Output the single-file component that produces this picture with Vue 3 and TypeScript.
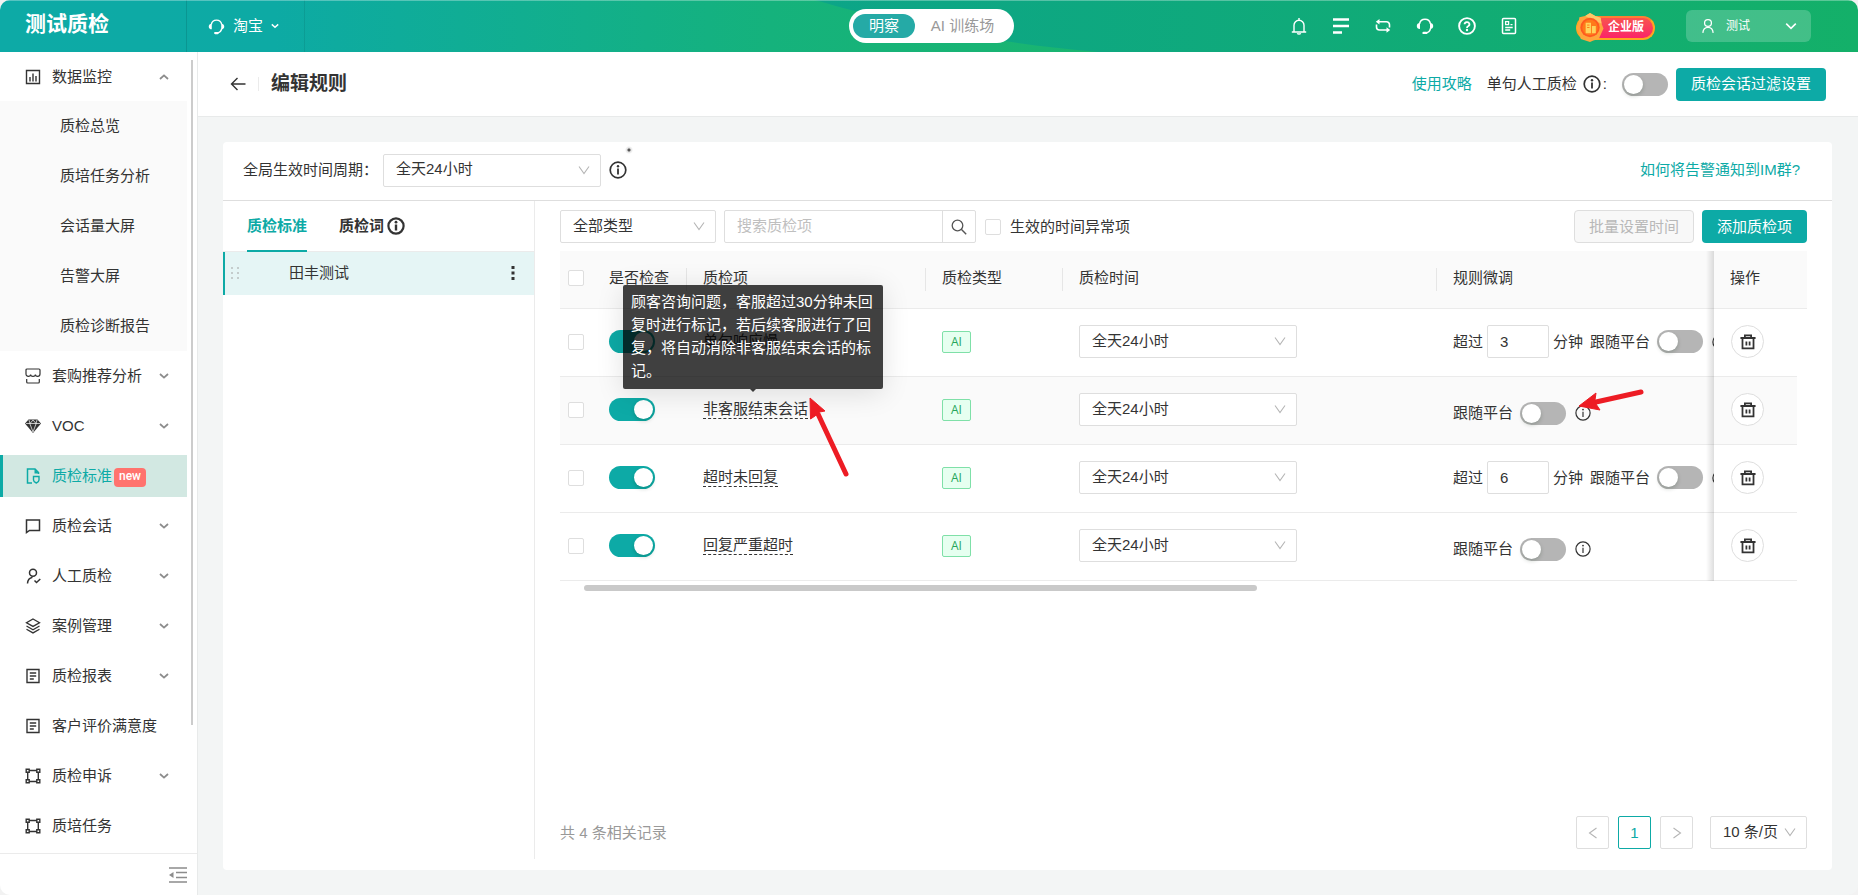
<script setup lang="ts">
import { ref } from 'vue'

interface MenuItem {
  label: string
  icon: string
  chevron?: boolean
  active?: boolean
  badge?: string
}

interface RuleRow {
  name: string
  enabled: boolean
  minutes?: number
  hovered?: boolean
  tip?: string
}

const subMenu: string[] = ['质检总览', '质培任务分析', '会话量大屏', '告警大屏', '质检诊断报告']

const menu: MenuItem[] = [
  { label: '套购推荐分析', icon: 'shop', chevron: true },
  { label: 'VOC', icon: 'diamond', chevron: true },
  { label: '质检标准', icon: 'standard', active: true, badge: 'new' },
  { label: '质检会话', icon: 'chat', chevron: true },
  { label: '人工质检', icon: 'person-check', chevron: true },
  { label: '案例管理', icon: 'layers', chevron: true },
  { label: '质检报表', icon: 'report', chevron: true },
  { label: '客户评价满意度', icon: 'report' },
  { label: '质检申诉', icon: 'frame', chevron: true },
  { label: '质培任务', icon: 'frame' },
]

const tools = [
  { icon: 'bell', label: '通知' },
  { icon: 'lines', label: '列表' },
  { icon: 'swap', label: '切换' },
  { icon: 'headset', label: '客服' },
  { icon: 'help', label: '帮助' },
  { icon: 'doc', label: '文档' },
]

const rows = ref<RuleRow[]>([
  { name: '单句响应慢', enabled: true, minutes: 3 },
  {
    name: '非客服结束会话',
    enabled: true,
    hovered: true,
    tip: '顾客咨询问题，客服超过30分钟未回复时进行标记，若后续客服进行了回复，将自动消除非客服结束会话的标记。',
  },
  { name: '超时未回复', enabled: true, minutes: 6 },
  { name: '回复严重超时', enabled: true },
])
</script>

<template>
  <svg class="sprite" aria-hidden="true">
    <symbol id="i-headset" viewBox="0 0 18 18">
      <path d="M3.500 6.800A5.600 5.600 0 0 1 14.500 6.800M14.500 11.300C14 14 12 15.800 9.200 15.900" fill="none" stroke="currentColor" stroke-width="1.500" />
      <path d="M4 6v6C1.900 12 .8 10.800 .8 9S1.900 6 4 6zM14 6v6c2.100 0 3.200-1.200 3.200-3S16.100 6 14 6z" fill="currentColor" />
      <path d="M7.600 15.900h2.600" stroke="currentColor" stroke-width="2.400" stroke-linecap="round" />
    </symbol>
    <symbol id="i-bell" viewBox="0 0 18 18">
      <path d="M4 15V8.200a5 5 0 0 1 10 0V15M1.800 15h14.400M9 3V1M7.300 16.200a1.800 1.300 0 0 0 3.400 0" fill="none" stroke="currentColor" stroke-width="1.400" />
    </symbol>
    <symbol id="i-lines" viewBox="0 0 18 18">
      <path d="M1 2.500h16M1 9h16M1 15.500h9" stroke="currentColor" stroke-width="2.400" />
    </symbol>
    <symbol id="i-swap" viewBox="0 0 18 18">
      <path d="M4 4.800h8.500a3 3 0 0 1 3 3v2.700M14 13H5.500a3 3 0 0 1-3-3V7.500" fill="none" stroke="currentColor" stroke-width="1.600" />
      <path d="M5.500 2v5.600L1.800 4.800zM12.500 10.200v5.600l3.700-2.800z" fill="currentColor" />
    </symbol>
    <symbol id="i-help" viewBox="0 0 18 18">
      <circle cx="9" cy="9" r="7.900" fill="none" stroke="currentColor" stroke-width="1.900" />
      <path d="M6.600 7.200a2.400 2.200 0 1 1 3.500 2c-.8.400-1.100.8-1.100 1.700" fill="none" stroke="currentColor" stroke-width="1.800" />
      <circle cx="9" cy="13" r="1.200" fill="currentColor" />
    </symbol>
    <symbol id="i-doc" viewBox="0 0 18 18">
      <rect x="2.500" y="1.500" width="13" height="15" rx="1" fill="none" stroke="currentColor" stroke-width="1.500" />
      <path d="M5.600 4.700h3v3h-3zM10.500 7.700h2M5.200 10.500h7.500M5.200 13h5" fill="none" stroke="currentColor" stroke-width="1.300" />
    </symbol>
    <symbol id="i-user" viewBox="0 0 14 18">
      <circle cx="7" cy="5.500" r="4" fill="none" stroke="currentColor" stroke-width="1.500" />
      <path d="M1 17c.3-4 2.500-6.500 6-6.500s5.700 2.500 6 6.500" fill="none" stroke="currentColor" stroke-width="1.500" />
    </symbol>
    <symbol id="i-chart" viewBox="0 0 16 16">
      <path d="M1.500 1.500h13v13h-13zM5 8v4.500M8 4.500v8M11 7v5.500" fill="none" stroke="currentColor" stroke-width="1.400" />
    </symbol>
    <symbol id="i-shop" viewBox="0 0 16 16">
      <path d="M1 6V2a1 1 0 0 1 1-1h12a1 1 0 0 1 1 1v4c0 1.500-1.200 2.300-2.300 2.300S10.400 7.500 10.400 6.500C10.400 7.500 9.300 8.300 8 8.300S5.600 7.500 5.600 6.500C5.600 7.500 4.400 8.300 3.300 8.300S1 7.500 1 6zM1.700 11v3a1 1 0 0 0 1 1h10.600a1 1 0 0 0 1-1v-3" fill="none" stroke="currentColor" stroke-width="1.200" />
    </symbol>
    <symbol id="i-diamond" viewBox="0 0 16 16">
      <path d="M3.500 1.500h9L16 5.500 8 15 0 5.500z" fill="currentColor" />
      <path d="M1 5.500h14M4.800 5.500 8 14 11.200 5.500M4 2l1 3.500L8 2l3 3.500L12 2" fill="none" stroke="#fff" stroke-width=".7" />
    </symbol>
    <symbol id="i-standard" viewBox="0 0 16 16">
      <path d="M13.500 6V4.500l-3.500-3.500H2.500v14H7" fill="none" stroke="currentColor" stroke-width="1.500" />
      <path d="M9.500 1v4.500H14z" fill="currentColor" />
      <path d="M8.500 8.500h5.500v3.500c0 1.500-1.200 2.300-2.700 3-1.600-.7-2.800-1.500-2.800-3z" fill="none" stroke="currentColor" stroke-width="1.400" />
    </symbol>
    <symbol id="i-chat" viewBox="0 0 16 16">
      <path d="M1.500 2h13v10.500h-10l-3 2z" fill="none" stroke="currentColor" stroke-width="1.500" />
    </symbol>
    <symbol id="i-person-check" viewBox="0 0 16 16">
      <circle cx="8" cy="4.800" r="3.500" fill="none" stroke="currentColor" stroke-width="1.500" />
      <path d="M2.500 15.500c.2-3.500 2-5.500 5-6.200M9.500 12.500l2 2 3.800-3.500" fill="none" stroke="currentColor" stroke-width="1.500" />
    </symbol>
    <symbol id="i-layers" viewBox="0 0 16 16">
      <path d="M8 1l6.500 3.700L8 8.400 1.500 4.700zM1.500 8 8 11.700 14.500 8M1.500 11.200 8 14.900l6.500-3.700" fill="none" stroke="currentColor" stroke-width="1.300" />
    </symbol>
    <symbol id="i-report" viewBox="0 0 16 16">
      <path d="M2 1.500h12v13H2zM4.800 5h6.400M4.800 8h6.400M4.800 11h4" fill="none" stroke="currentColor" stroke-width="1.400" />
    </symbol>
    <symbol id="i-frame" viewBox="0 0 16 16">
      <path d="M1.200 1.200h3v3h-3zM11.800 1.200h3v3h-3zM1.200 11.800h3v3h-3zM11.800 11.800h3v3h-3zM4.200 2.500h7.600M4.200 13.500h7.600M2.700 4.200v7.600M13.300 4.200v7.600" fill="none" stroke="currentColor" stroke-width="1.400" />
    </symbol>
    <symbol id="i-down" viewBox="0 0 12 12">
      <path d="M1 2.500l5 7L11 2.500" fill="none" stroke="currentColor" stroke-width="1.100" />
    </symbol>
    <symbol id="i-chev" viewBox="0 0 10 10">
      <path d="M1 3l4 3.600L9 3" fill="none" stroke="currentColor" stroke-width="1.800" />
    </symbol>
    <symbol id="i-chev-thin" viewBox="0 0 10 10">
      <path d="M1 3l4 4 4-4" fill="none" stroke="currentColor" stroke-width="1.300" />
    </symbol>
    <symbol id="i-info" viewBox="0 0 18 18">
      <circle cx="9" cy="9" r="7.800" fill="none" stroke="currentColor" stroke-width="1.700" />
      <path d="M9 7.500V13.500" stroke="currentColor" stroke-width="1.800" />
      <circle cx="9" cy="5.200" r="1.200" fill="currentColor" />
    </symbol>
    <symbol id="i-info-bold" viewBox="0 0 18 18">
      <circle cx="9" cy="9" r="7.600" fill="none" stroke="currentColor" stroke-width="2.200" />
      <path d="M9 7.500V13.500" stroke="currentColor" stroke-width="2.400" />
      <circle cx="9" cy="5.200" r="1.400" fill="currentColor" />
    </symbol>
    <symbol id="i-info-thin" viewBox="0 0 16 16">
      <circle cx="8" cy="8" r="7.100" fill="none" stroke="currentColor" stroke-width="1.200" />
      <path d="M8 6.800V12" stroke="currentColor" stroke-width="1.200" />
      <circle cx="8" cy="4.600" r=".9" fill="currentColor" />
    </symbol>
    <symbol id="i-trash" viewBox="0 0 18 18">
      <path d="M.5 4.500h17M5.500 4V1.500h7V4M2.800 4.500v11.600h12.400V4.500M7.200 8.500V13M10.800 8.500V13" fill="none" stroke="currentColor" stroke-width="2" />
    </symbol>
    <symbol id="i-search" viewBox="0 0 16 16">
      <circle cx="6.500" cy="6.500" r="5.300" fill="none" stroke="currentColor" stroke-width="1.300" />
      <path d="M10.300 10.300 15.200 15.200" stroke="currentColor" stroke-width="1.400" />
    </symbol>
  </svg>

  <div class="app">
    <header class="top">
      <svg class="top-bg" viewBox="0 0 1858 52" preserveAspectRatio="none" aria-hidden="true">
        <defs>
          <linearGradient id="g-left" x1="0" x2="1">
            <stop offset="0" stop-color="#0daaa6" />
            <stop offset=".25" stop-color="#0daaa4" />
            <stop offset=".7" stop-color="#15b27c" />
            <stop offset="1" stop-color="#1ab570" />
          </linearGradient>
          <linearGradient id="g-right" x1="0" x2="1">
            <stop offset="0" stop-color="#0ca588" />
            <stop offset="1" stop-color="#14b069" />
          </linearGradient>
        </defs>
        <rect width="1100" height="52" fill="url(#g-left)" />
        <path d="M815 0C890 22 985 42 1098 52H1858V0z" fill="url(#g-right)" />
      </svg>
      <div class="top-left">
        <div class="brand">测试质检</div>
        <button class="platform" type="button">
          <svg class="ic17"><use href="#i-headset" /></svg>
          <span>淘宝</span>
          <svg class="ic7"><use href="#i-chev" /></svg>
        </button>
      </div>
      <div class="mode">
        <button class="mode-btn on" type="button">明察</button>
        <button class="mode-btn" type="button">AI 训练场</button>
      </div>
      <div class="top-right">
        <div class="tools">
          <button v-for="t in tools" :key="t.icon" class="tool" type="button" :aria-label="t.label">
            <svg class="ic18"><use :href="'#i-' + t.icon" /></svg>
          </button>
        </div>
        <div class="plan">
          <svg class="plan-medal" viewBox="0 0 28 30" aria-hidden="true">
            <path d="M14 0l5.500 3.200L25 5l1 6 2 5-2.500 5.500L23 27l-5.500 1.500L14 30l-4-1.200L4.500 27 2.500 21 0 15.500 2.200 10 3 4.500 9 3z" fill="#ffa63d" />
            <path d="M14 0l5.500 3.200L25 5l1 6L9 3z" fill="#ffc869" />
            <circle cx="14" cy="15" r="10" fill="#ff5a1f" />
            <circle cx="14" cy="15" r="8" fill="#ff7a1a" />
            <path d="M9.500 10h5.500v11H9.500zM16 13.500h4V21h-4z" fill="#ffd35c" />
            <path d="M11 12.500h2.500M11 15h2.500" stroke="#ff7a1a" stroke-width="1" />
          </svg>
          <span class="plan-label">企业版</span>
        </div>
        <button class="user" type="button">
          <svg class="ic-user"><use href="#i-user" /></svg>
          <span>测试</span>
          <svg class="ic12"><use href="#i-chev-thin" /></svg>
        </button>
      </div>
    </header>

    <div class="body">
      <aside class="side">
        <nav class="nav">
          <a class="nav-item first" href="#">
            <svg class="ic16"><use href="#i-chart" /></svg>
            <span>数据监控</span>
            <svg class="nav-chev up"><use href="#i-chev" /></svg>
          </a>
          <div class="sub">
            <a v-for="s in subMenu" :key="s" class="sub-item" href="#">{{ s }}</a>
          </div>
          <a v-for="m in menu" :key="m.label" class="nav-item" :class="{ active: m.active }" href="#">
            <svg class="ic16"><use :href="'#i-' + m.icon" /></svg>
            <span>{{ m.label }}</span>
            <em v-if="m.badge" class="new">{{ m.badge }}</em>
            <svg v-if="m.chevron" class="nav-chev"><use href="#i-chev" /></svg>
          </a>
          <i class="side-thumb"></i>
        </nav>
        <div class="side-foot">
          <button class="fold" type="button" aria-label="收起菜单">
            <svg viewBox="0 0 18 16" width="18" height="16">
              <path d="M0 1h18M7 5.500h11M7 10.500h11M0 15h18" stroke="#8c8c8c" stroke-width="1.300" />
              <path d="M4.500 5v6L0 8z" fill="#8c8c8c" />
            </svg>
          </button>
        </div>
      </aside>

      <div class="content">
        <div class="page-head">
          <button class="back" type="button" aria-label="返回">
            <svg viewBox="0 0 16 14" width="16" height="14">
              <path d="M15.500 7H1.500M7.500 1l-6 6 6 6" fill="none" stroke="#333" stroke-width="1.400" />
            </svg>
          </button>
          <h1>编辑规则</h1>
          <a class="guide" href="#">使用攻略</a>
          <label class="single" for="single-switch">
            单句人工质检
            <svg class="ic18"><use href="#i-info" /></svg>
            <span>:</span>
          </label>
          <input id="single-switch" class="switch" type="checkbox" role="switch" />
          <button class="primary wide" type="button">质检会话过滤设置</button>
        </div>

        <main class="main">
          <section class="card">
            <div class="period">
              <label for="period">全局生效时间周期：</label>
              <div class="select w218">
                <select id="period"><option>全天24小时</option></select>
                <svg class="arrow"><use href="#i-down" /></svg>
              </div>
              <span class="period-info">
                <svg class="ic18"><use href="#i-info" /></svg>
                <i class="spark"></i>
              </span>
              <a class="im" href="#">如何将告警通知到IM群?</a>
            </div>

            <div class="split">
              <div class="left">
                <div class="tabs" role="tablist">
                  <button class="tab on" type="button" role="tab">质检标准</button>
                  <button class="tab" type="button" role="tab">
                    质检词<svg class="ic18"><use href="#i-info-bold" /></svg>
                  </button>
                </div>
                <div class="std">
                  <svg class="grip" viewBox="0 0 8 12" aria-hidden="true">
                    <path d="M0 0h2v2H0zM6 0h2v2H6zM0 5h2v2H0zM6 5h2v2H6zM0 10h2v2H0zM6 10h2v2H6z" fill="#c4cccc" />
                  </svg>
                  <span>田丰测试</span>
                  <button class="more" type="button" aria-label="更多">
                    <svg viewBox="0 0 4 14" width="4" height="14">
                      <path d="M.5 0h3v3h-3zM.5 5.500h3v3h-3zM.5 11h3v3h-3z" fill="#333" />
                    </svg>
                  </button>
                </div>
              </div>

              <div class="right">
                <div class="filters">
                  <div class="select w156">
                    <select aria-label="类型"><option>全部类型</option></select>
                    <svg class="arrow"><use href="#i-down" /></svg>
                  </div>
                  <div class="search">
                    <input type="text" placeholder="搜索质检项" aria-label="搜索质检项" />
                    <button type="button" aria-label="搜索"><svg class="ic16"><use href="#i-search" /></svg></button>
                  </div>
                  <label class="abnormal"><input class="box" type="checkbox" />生效的时间异常项</label>
                  <button class="ghost" type="button" disabled>批量设置时间</button>
                  <button class="primary" type="button">添加质检项</button>
                </div>

                <table class="grid">
                  <colgroup>
                    <col class="c1" /><col class="c2" /><col class="c3" /><col class="c4" />
                    <col class="c5" /><col /><col class="c7" /><col class="c8" />
                  </colgroup>
                  <thead>
                    <tr>
                      <th class="pick"><input class="box" type="checkbox" aria-label="全选" /></th>
                      <th class="div">是否检查</th>
                      <th class="div">质检项</th>
                      <th class="div">质检类型</th>
                      <th class="div">质检时间</th>
                      <th>规则微调</th>
                      <th class="fixed">操作</th>
                      <th></th>
                    </tr>
                  </thead>
                  <tbody>
                    <tr v-for="(r, i) in rows" :key="r.name" :class="{ hovered: r.hovered }">
                      <td class="pick"><input class="box" type="checkbox" :aria-label="'选择' + r.name" /></td>
                      <td><input v-model="r.enabled" class="switch" type="checkbox" role="switch" :aria-label="r.name" /></td>
                      <td>
                        <span class="name">
                          <span class="name-text">{{ r.name }}</span>
                          <span v-if="r.tip" class="tip" role="tooltip">{{ r.tip }}</span>
                          <svg v-if="r.tip" class="mark-a" viewBox="0 0 44 84" aria-hidden="true">
                            <path d="M10 18 38 78" stroke="#ed1c24" stroke-width="5" stroke-linecap="round" />
                            <path d="M2 2 17 15 11.500 16 7 20 2.500 23z" fill="#ed1c24" stroke="#ed1c24" stroke-width="1" />
                          </svg>
                        </span>
                      </td>
                      <td><span class="ai">AI</span></td>
                      <td>
                        <div class="select w218">
                          <select :aria-label="r.name + '质检时间'"><option>全天24小时</option></select>
                          <svg class="arrow"><use href="#i-down" /></svg>
                        </div>
                      </td>
                      <td class="tune-cell">
                        <div class="tune" :class="{ low: r.minutes === undefined }">
                          <label v-if="r.minutes !== undefined" class="over">
                            超过<input v-model="r.minutes" class="num" type="text" />分钟
                          </label>
                          <label :for="'follow-' + i">跟随平台</label>
                          <input :id="'follow-' + i" class="switch" type="checkbox" role="switch" />
                          <span class="tune-info">
                            <svg class="ic16"><use href="#i-info-thin" /></svg>
                            <svg v-if="r.tip" class="mark-b" viewBox="0 0 68 24" aria-hidden="true">
                              <path d="M63 4 18 14" stroke="#ed1c24" stroke-width="5" stroke-linecap="round" />
                              <path d="M1 18 18 5 17 12 18 16 22 22z" fill="#ed1c24" stroke="#ed1c24" stroke-width="1" />
                            </svg>
                          </span>
                        </div>
                      </td>
                      <td class="fixed">
                        <button class="trash" type="button" :aria-label="'删除' + r.name"><svg class="ic16"><use href="#i-trash" /></svg></button>
                      </td>
                      <td class="gutter"></td>
                    </tr>
                  </tbody>
                </table>
                <div class="hbar"><i></i></div>

                <div class="pager">
                  <span class="total">共 4 条相关记录</span>
                  <button class="pg" type="button" aria-label="上一页"><svg class="ic12 prev"><use href="#i-down" /></svg></button>
                  <button class="pg on" type="button">1</button>
                  <button class="pg" type="button" aria-label="下一页"><svg class="ic12 next"><use href="#i-down" /></svg></button>
                  <div class="select size">
                    <select aria-label="每页条数"><option>10 条/页</option></select>
                    <svg class="arrow"><use href="#i-down" /></svg>
                  </div>
                </div>
              </div>
            </div>
          </section>
        </main>
      </div>
    </div>
  </div>
</template>

<style>
body {
  margin: 0;
  background: #f2f2f2;
}
</style>

<style scoped>
.sprite {
  position: absolute;
  width: 0;
  height: 0;
}

.app,
.app * {
  box-sizing: border-box;
}

.app {
  display: flex;
  flex-direction: column;
  min-height: 100vh;
  overflow: hidden;
  border-radius: 10px;
  background: #f3f5f5;
  color: #333;
  font-family: 'Liberation Sans', 'Noto Sans CJK SC', sans-serif;
  font-size: 15px;
  line-height: 22px;
}

button,
input,
select {
  margin: 0;
  padding: 0;
  border: 0;
  background: none;
  color: inherit;
  font: inherit;
}

svg {
  display: block;
  flex: none;
}

a {
  color: inherit;
  text-decoration: none;
}

.ic7 { width: 8px; height: 8px; }
.ic12 { width: 12px; height: 12px; }
.ic16 { width: 16px; height: 16px; }
.ic17 { width: 17px; height: 17px; }
.ic18 { width: 18px; height: 18px; }

/* top bar */
.top {
  position: relative;
  display: grid;
  grid-template-columns: minmax(0, 1fr) auto minmax(0, 1fr);
  align-items: center;
  height: 52px;
  color: #fff;
}

.top-bg {
  position: absolute;
  inset: 0;
  width: 100%;
  height: 100%;
}

.top::after {
  content: '';
  position: absolute;
  inset: 0 0 auto;
  height: 1px;
  background: rgba(255, 255, 255, 0.3);
}

.top-left,
.mode,
.top-right {
  position: relative;
  display: flex;
  align-items: center;
}

.top-left {
  align-self: stretch;
  align-items: stretch;
}

.brand {
  width: 187px;
  padding: 9px 0 0 25px;
  border-right: 1px solid rgba(0, 60, 60, 0.18);
  font-size: 21px;
  font-weight: 700;
  line-height: 30px;
}

.platform {
  display: flex;
  align-items: center;
  width: 118px;
  padding-left: 21px;
  border-right: 1px solid rgba(0, 60, 60, 0.12);
}

.platform span {
  margin: 0 8px;
}

.mode {
  width: 165px;
  height: 34px;
  margin-left: 5px;
  padding: 0 4px;
  border-radius: 17px;
  background: #fff;
}

.mode-btn {
  flex: 1;
  height: 24px;
  color: #999;
}

.mode-btn.on {
  flex: none;
  width: 62px;
  border-radius: 12px;
  background: #25aaa6;
  color: #fff;
}

.top-right {
  justify-content: flex-end;
  padding-right: 47px;
}

.tools {
  display: flex;
  gap: 24px;
  margin-right: 58px;
}

.plan {
  position: relative;
  width: 79px;
  height: 24px;
  margin: 4px 31px 0 0;
  padding-left: 30px;
  border: 2px solid #ffa51f;
  border-top-color: #ff7d33;
  border-radius: 12px;
  background: linear-gradient(#f8544e, #fb2469);
  font-size: 12px;
  font-weight: 700;
  line-height: 18px;
}

.plan-medal {
  position: absolute;
  top: -5px;
  left: -2px;
  width: 28px;
  height: 29px;
}

.plan-label {
  display: block;
}

.user {
  display: flex;
  align-items: center;
  width: 125px;
  height: 32px;
  padding: 0 14px 0 16px;
  border-radius: 6px;
  background: rgba(255, 255, 255, 0.2);
  font-size: 12px;
}

.user span {
  margin: 0 auto 0 12px;
}

.ic-user {
  width: 12px;
  height: 16px;
}

/* sidebar */
.body {
  display: flex;
  flex: 1;
}

.side {
  display: flex;
  flex: none;
  flex-direction: column;
  width: 198px;
  border-right: 1px solid #e8eaea;
  background: #fff;
}

.nav {
  position: relative;
  display: flex;
  flex: 1;
  flex-direction: column;
  padding-right: 10px;
}

.nav-item {
  display: flex;
  flex: none;
  align-items: center;
  height: 42px;
  margin: 4px 0;
  padding: 0 18px 0 25px;
  white-space: nowrap;
}

.nav-item.first {
  height: 49px;
  margin: 0;
}

.nav-item > span {
  margin-left: 11px;
}

.nav-item.active {
  padding-left: 22px;
  border-left: 3px solid #0daaa6;
  background: #d2e8e2;
  color: #0daaa6;
}

.nav-chev {
  width: 10px;
  height: 10px;
  margin-left: auto;
  color: #8c8c8c;
}

.nav-chev.up {
  transform: rotate(180deg);
}

.new {
  height: 19px;
  margin: 2px 0 0 2px;
  padding: 0 5px;
  border-radius: 4px;
  background: #ff736e;
  color: #fff;
  font-family: Roboto, sans-serif;
  font-size: 12px;
  font-style: normal;
  font-weight: 500;
  line-height: 17px;
}

.sub {
  background: #fafafa;
}

.sub-item {
  display: flex;
  align-items: center;
  height: 50px;
  padding-left: 60px;
}

.side-thumb {
  position: absolute;
  top: 8px;
  right: 4px;
  width: 2px;
  height: 83%;
  background: #ccc;
}

.side-foot {
  display: flex;
  align-items: center;
  justify-content: flex-end;
  height: 42px;
  padding-right: 10px;
  border-top: 1px solid #ebebeb;
}

/* page heading */
.content {
  display: flex;
  flex: 1;
  flex-direction: column;
  min-width: 0;
}

.page-head {
  display: flex;
  align-items: center;
  height: 65px;
  padding: 0 32px;
  border-bottom: 1px solid #e8eaea;
  background: #fff;
  white-space: nowrap;
}

.back {
  width: 29px;
  padding: 0;
  border-right: 1px solid #ebebeb;
}

h1 {
  margin: 0 auto 0 12px;
  font-size: 19px;
  line-height: 28px;
}

.guide,
.im {
  color: #0daaa6;
}

.single {
  display: flex;
  align-items: center;
  margin: 0 15px;
}

.single svg {
  margin: 0 2px 0 6px;
}

.switch {
  appearance: none;
  display: block;
  flex: none;
  width: 46px;
  height: 23px;
  padding: 2px;
  border-radius: 12px;
  background: #b5b5b5;
}

.switch::before {
  content: '';
  display: block;
  width: 19px;
  height: 19px;
  border-radius: 50%;
  background: #fff;
  box-shadow: 0 2px 4px rgba(0, 35, 11, 0.2);
}

.switch:checked {
  background: #0daaa6;
}

.switch:checked::before {
  margin-left: 23px;
}

.primary {
  height: 33px;
  padding: 0 15px;
  border-radius: 4px;
  background: #0daaa6;
  color: #fff;
  white-space: nowrap;
}

.primary.wide {
  margin-left: 8px;
}

/* card */
.main {
  display: flex;
  flex: 1;
  padding: 25px 26px 25px 25px;
}

.card {
  display: flex;
  flex: 1;
  flex-direction: column;
  min-width: 0;
  border-radius: 4px;
  background: #fff;
}

.period {
  display: flex;
  align-items: center;
  height: 59px;
  padding: 0 32px 2px 20px;
  border-bottom: 1px solid #dedede;
}

.period label {
  margin-right: 5px;
}

.period-info {
  position: relative;
  margin-left: 8px;
}

.spark {
  position: absolute;
  top: -15px;
  left: 16px;
  width: 8px;
  height: 8px;
  background: radial-gradient(#555 0 1px, rgba(150, 150, 150, 0.3) 2px, transparent 4px);
}

.im {
  margin-left: auto;
}

.select {
  position: relative;
}

.select select {
  appearance: none;
  display: block;
  width: 100%;
  height: 33px;
  padding: 0 28px 2px 12px;
  border: 1px solid #dedede;
  border-radius: 2px;
  background: #fff;
}

.select .arrow {
  position: absolute;
  top: 10px;
  right: 11px;
  width: 12px;
  height: 12px;
  color: #b5b5b5;
  pointer-events: none;
}

.w218 { width: 218px; }
.w156 { width: 156px; }

.split {
  display: flex;
  flex: 1;
}

.left {
  width: 312px;
  margin-bottom: 11px;
  border-right: 1px solid #ebebeb;
}

.tabs {
  display: flex;
  gap: 32px;
  height: 51px;
  padding-left: 24px;
  border-bottom: 1px solid #ebebeb;
}

.tab {
  display: flex;
  align-items: center;
  height: 51px;
  border-bottom: 2px solid transparent;
  font-weight: 700;
}

.tab svg {
  margin-left: 3px;
}

.tab.on {
  border-color: #0daaa6;
  color: #0daaa6;
}

.std {
  display: flex;
  align-items: center;
  height: 43px;
  padding: 0 19px 2px 6px;
  border-left: 2px solid #0daaa6;
  background: #e5f5f5;
}

.grip {
  width: 8px;
  height: 12px;
}

.std span {
  margin: 0 auto 0 50px;
}

.right {
  display: flex;
  flex: 1;
  flex-direction: column;
  min-width: 0;
  padding: 9px 25px 21px;
}

.filters {
  display: flex;
  align-items: center;
  margin-bottom: 8px;
}

.search {
  display: flex;
  width: 252px;
  height: 33px;
  margin: 0 9px 0 8px;
  border: 1px solid #dedede;
  border-radius: 2px;
}

.search input {
  flex: 1;
  min-width: 0;
  padding: 0 12px 2px;
}

.search input::placeholder {
  color: #bfbfbf;
}

.search button {
  display: grid;
  place-items: center;
  width: 33px;
  border-left: 1px solid #dedede;
  color: #555;
}

.box {
  appearance: none;
  display: block;
  width: 16px;
  height: 16px;
  border: 1px solid #dedede;
  border-radius: 2px;
  background: #fff;
}

.abnormal {
  display: flex;
  align-items: center;
  gap: 9px;
  margin-right: auto;
}

.ghost {
  height: 33px;
  margin-right: 8px;
  padding: 0 14px;
  border: 1px solid #dedede;
  border-radius: 4px;
  background: #f8f8f8;
  color: #b8b8b8;
}

/* table */
.grid {
  width: 100%;
  border-spacing: 0;
  table-layout: fixed;
}

.c1 { width: 33px; }
.c2 { width: 94px; }
.c3 { width: 239px; }
.c4 { width: 137px; }
.c5 { width: 374px; }
.c7 { width: 83px; }
.c8 { width: 10px; }

th {
  position: relative;
  height: 58px;
  padding: 0 0 3px 16px;
  border-bottom: 1px solid #ebebeb;
  background: #fafafa;
  font-weight: 400;
  text-align: left;
}

th.div::after {
  content: '';
  position: absolute;
  top: 17px;
  right: 0;
  width: 1px;
  height: 23px;
  background: #e6e6e6;
}

td {
  height: 68px;
  padding: 0 0 2px 16px;
  border-bottom: 1px solid #ebebeb;
}

th.pick,
td.pick,
th:last-child {
  padding-left: 8px;
}

.hovered td {
  background: #fafafa;
}

tr .gutter {
  padding: 0;
  border: 0;
  background: none;
}

.fixed {
  position: relative;
}

td.fixed {
  padding-left: 17px;
}

.fixed::before {
  content: '';
  position: absolute;
  top: 0;
  bottom: -1px;
  left: -8px;
  width: 8px;
  background: linear-gradient(to right, transparent, rgba(0, 0, 0, 0.13));
}

.name {
  position: relative;
  display: inline-block;
  vertical-align: top;
}

.name-text {
  display: block;
  border-bottom: 1px dashed #333;
  line-height: 19px;
}

.tip {
  position: absolute;
  bottom: calc(100% + 10px);
  left: -80px;
  z-index: 5;
  width: 260px;
  padding: 5px 8px 7px;
  border-radius: 2px;
  background: rgba(0, 0, 0, 0.75);
  box-shadow: 0 4px 28px rgba(0, 0, 0, 0.12);
  color: #fff;
  line-height: 23px;
}

.tip::after {
  content: '';
  position: absolute;
  top: 100%;
  left: 50%;
  border: 3px solid transparent;
  border-top-color: rgba(0, 0, 0, 0.75);
  border-bottom: 0;
  transform: translateX(-50%);
}

.mark-a {
  position: absolute;
  top: -3px;
  left: 100%;
  z-index: 6;
  width: 44px;
  height: 84px;
}

.ai {
  display: block;
  width: 29px;
  height: 22px;
  border: 1px solid #7fe0a8;
  border-radius: 2px;
  background: #e6fff0;
  color: #26a65b;
  font-family: 'Open Sans', sans-serif;
  font-size: 12px;
  line-height: 20px;
  text-align: center;
}

.tune-cell {
  overflow: hidden;
}

.tune {
  display: flex;
  align-items: center;
  white-space: nowrap;
}

.tune.low {
  padding-top: 7px;
}

.over {
  display: flex;
  align-items: center;
  gap: 4px;
  margin-right: 7px;
}

.num {
  width: 62px;
  height: 33px;
  padding: 0 12px;
  border: 1px solid #dedede;
  border-radius: 2px;
}

.tune .switch {
  margin: 0 9px 0 7px;
}

.tune-info {
  position: relative;
}

.mark-b {
  position: absolute;
  bottom: 9px;
  left: 3px;
  width: 68px;
  height: 24px;
}

.trash {
  display: grid;
  place-items: center;
  width: 33px;
  height: 33px;
  border: 1px solid #dedede;
  border-radius: 50%;
  background: #fff;
}

.hbar {
  padding: 4px 0 0 24px;
}

.hbar i {
  display: block;
  width: 55%;
  height: 6px;
  border-radius: 3px;
  background: #c9c9c9;
}

/* pagination */
.pager {
  display: flex;
  align-items: center;
  margin-top: auto;
}

.total {
  margin-right: auto;
  color: #999;
}

.pg {
  display: grid;
  place-items: center;
  width: 33px;
  height: 33px;
  margin-right: 9px;
  border: 1px solid #dedede;
  border-radius: 2px;
  color: #b5b5b5;
}

.pg.on {
  border-color: #0daaa6;
  color: #0daaa6;
}

.prev {
  transform: rotate(90deg);
}

.next {
  transform: rotate(-90deg);
}

.size {
  width: 97px;
  margin-left: 8px;
}

.size select {
  padding-right: 20px;
}
</style>
